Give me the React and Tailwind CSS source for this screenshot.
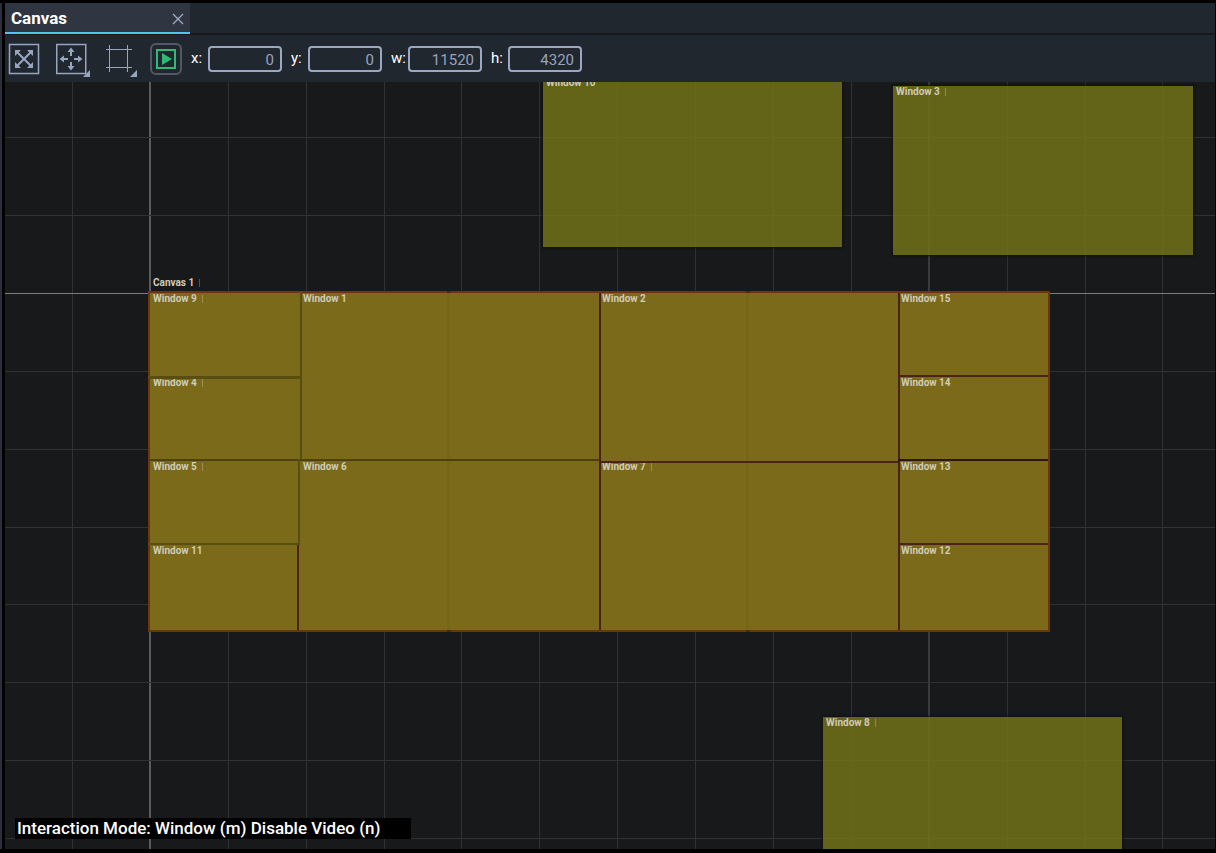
import { useState } from 'react'

const GRID_X = [
  { at: 67 },
  { at: 144, size: 2, color: '#5a5b5c' },
  { at: 223 },
  { at: 301 },
  { at: 379 },
  { at: 456 },
  { at: 534 },
  { at: 612 },
  { at: 690 },
  { at: 768 },
  { at: 846 },
  { at: 923, size: 2, color: '#3a3b3c' },
  { at: 1002 },
  { at: 1080 },
  { at: 1157 },
]

const GRID_Y = [
  { at: 55 },
  { at: 133 },
  { at: 211, color: '#7b7c7c' },
  { at: 289 },
  { at: 367 },
  { at: 445 },
  { at: 522 },
  { at: 600 },
  { at: 678 },
  { at: 756 },
]

// windows parked outside of the canvas, in stage coordinates
const FREE_WINDOWS = [
  { name: 'Window 10', x: 538, y: -5, w: 299, h: 170 },
  { name: 'Window 3', x: 888, y: 4, w: 300, h: 169, mark: true },
  { name: 'Window 8', x: 818, y: 635, w: 299, h: 169, mark: true },
]

// windows on the canvas, relative to its top left corner
const CANVAS_WINDOWS = [
  { name: 'Window 9', x: 2, y: 2, w: 150, h: 84, mark: true },
  { name: 'Window 4', x: 2, y: 86, w: 150, h: 84, mark: true },
  { name: 'Window 5', x: 2, y: 170, w: 150, h: 84, mark: true },
  { name: 'Window 11', x: 2, y: 254, w: 150, h: 84 },
  { name: 'Window 1', x: 152, y: 2, w: 299, h: 168 },
  { name: 'Window 6', x: 152, y: 170, w: 299, h: 168 },
  { name: 'Window 2', x: 451, y: 2, w: 299, h: 168 },
  { name: 'Window 7', x: 451, y: 170, w: 299, h: 168, mark: true },
  { name: 'Window 15', x: 750, y: 2, w: 150, h: 84 },
  { name: 'Window 14', x: 750, y: 86, w: 150, h: 84 },
  { name: 'Window 13', x: 750, y: 170, w: 150, h: 84 },
  { name: 'Window 12', x: 750, y: 254, w: 150, h: 84 },
]

const OLIVE = '#584e12'
const RED = '#4b2215'

const SEAMS = [
  { x: 299, y: 2, w: 3, h: 337, fill: '#766717' },
  { x: 299, y: 0, w: 4, h: 2, fill: '#4a2c0b' },
  { x: 299, y: 339, w: 4, h: 2, fill: '#4a2c0b' },
  { x: 598, y: 2, w: 3, h: 337, fill: '#766717' },
  { x: 598, y: 0, w: 4, h: 2, fill: '#4a2c0b' },
  { x: 598, y: 339, w: 4, h: 2, fill: '#4a2c0b' },
  { x: 0, y: 85, w: 154, h: 3, fill: OLIVE },
  { x: 152, y: 0, w: 2, h: 170, fill: OLIVE },
  { x: 0, y: 168, w: 452, h: 2, fill: '#4b4210' },
  { x: 150, y: 168, w: 2, h: 86, fill: OLIVE },
  { x: 0, y: 252, w: 151, h: 2, fill: OLIVE },
  { x: 149, y: 254, w: 2, h: 85, fill: RED },
  { x: 451, y: 2, w: 2, h: 337, fill: RED },
  { x: 453, y: 170, w: 297, h: 2, fill: RED },
  { x: 750, y: 2, w: 2, h: 337, fill: RED },
  { x: 752, y: 84, w: 148, h: 2, fill: RED },
  { x: 750, y: 168, w: 150, h: 2, fill: '#2d170e' },
  { x: 752, y: 252, w: 148, h: 2, fill: RED },
]

function Label({ children, mark }) {
  return (
    <span className="inline-flex items-center gap-[5px] whitespace-nowrap text-[10px] leading-3 font-bold text-[#d0ccb8]">
      {children}
      {mark && <span className="h-2 w-px bg-white/25" />}
    </span>
  )
}

function StageWindow({ win, className }) {
  return (
    <div
      className={`absolute flex items-start pl-[3px] ${className}`}
      style={{ left: win.x, top: win.y, width: win.w, height: win.h }}
    >
      <Label mark={win.mark}>{win.name}</Label>
    </div>
  )
}

function Grid() {
  return (
    <svg className="absolute inset-0 h-full w-full" shapeRendering="crispEdges" aria-hidden="true">
      {GRID_X.map(({ at, size = 1, color = '#303132' }) => (
        <rect key={at} x={at} y="0" width={size} height="100%" fill={color} />
      ))}
      {GRID_Y.map(({ at, size = 1, color = '#303132' }) => (
        <rect key={at} x="0" y={at} width="100%" height={size} fill={color} />
      ))}
    </svg>
  )
}

function Field({ name, value, onChange }) {
  return (
    <label className="flex items-center text-[15px] text-white">
      <span className="w-[17px]">{name}:</span>
      <input
        type="text"
        value={value}
        onChange={(e) => onChange(e.target.value)}
        className="h-[26px] w-[74px] rounded-[4px] border-2 border-[#9ca8c3] bg-[#20272f] pt-0.5 pr-1.5 text-right text-[15px] text-[#98a3bd] outline-none"
      />
    </label>
  )
}

function FitIcon() {
  return (
    <svg width="32" height="36" viewBox="0 0 32 36" fill="none" stroke="#98a5c0" strokeWidth="2">
      <rect x="1.500" y="3.500" width="29" height="29" strokeWidth="1.500" />
      <path d="M9 11l14 14M23 11 9 25" />
      <path d="M7 9h6l-6 6zM25 9v6l-6-6zM25 27h-6l6-6zM7 27v-6l6 6z" fill="#98a5c0" stroke="none" />
    </svg>
  )
}

function MoveIcon() {
  return (
    <svg width="34" height="36" viewBox="0 0 34 36" fill="none" stroke="#98a5c0" strokeWidth="2">
      <rect x="0.750" y="3.500" width="29" height="29" strokeWidth="1.500" />
      <path d="M15 15V9M15 21v6M12 18H6M18 18h6" />
      <path
        d="M15 6.500 18.500 11h-7zM15 29.500l3.500-4.500h-7zM3.500 18 8 14.500v7zM26.500 18 22 14.500v7z"
        fill="#98a5c0"
        stroke="none"
      />
      <path d="M34 29v7h-7z" fill="#98a5c0" stroke="none" />
    </svg>
  )
}

function FrameIcon() {
  return (
    <svg width="36" height="36" viewBox="0 0 36 36" fill="none" stroke="#98a5c0">
      <path d="M5.500 4v27M23.500 4v27M2 8.500h26M2 26.500h26" />
      <path d="M33 29v7h-7z" fill="#98a5c0" stroke="none" />
    </svg>
  )
}

function PlayIcon() {
  return (
    <svg width="22" height="22" viewBox="0 0 22 22" fill="none">
      <rect x="2" y="2" width="18" height="18" stroke="#2fba78" strokeWidth="2" />
      <path d="M7 5v12l10-6z" fill="#2fba78" />
    </svg>
  )
}

export default function App() {
  const [rect, setRect] = useState({ x: '0', y: '0', w: '11520', h: '4320' })

  return (
    <div className="flex h-screen gap-[3px] bg-black pt-[3px] pr-px pb-1 font-[Roboto,sans-serif]">
      {/* edge of the neighbouring panel */}
      <div className="w-0.5 shrink-0 bg-[#2a303b]" />

      <main className="flex min-w-0 flex-1 flex-col bg-[#18191a]">
        {/* Tabs */}
        <div className="flex h-8 shrink-0 border-b-2 border-[#18191a] bg-[#20272f]">
          <div className="-mb-px flex w-[185px] items-center justify-between border-b-2 border-[#4ec5ee] bg-[#2f3541] pt-0.5 pr-1.5 pl-1.5">
            <h1 className="text-[17px] font-bold text-white">Canvas</h1>
            <button type="button" aria-label="Close" className="flex">
              <svg width="12" height="12" viewBox="0 0 12 12" stroke="#a3afc8" strokeWidth="1.200">
                <path d="M1 1l10 10M11 1 1 11" />
              </svg>
            </button>
          </div>
        </div>

        {/* Toolbar */}
        <div className="flex h-[47px] shrink-0 items-center bg-[#20272f] pl-[3px]">
          <div className="flex items-center gap-4">
            <button type="button" aria-label="Fit to view">
              <FitIcon />
            </button>
            <button type="button" aria-label="Move">
              <MoveIcon />
            </button>
          </div>
          <button type="button" aria-label="Frame" className="ml-3.5">
            <FrameIcon />
          </button>
          <button
            type="button"
            aria-label="Play"
            className="ml-2.5 flex size-8 items-center justify-center rounded-md border-2 border-[#525866]"
          >
            <PlayIcon />
          </button>
          <div className="ml-[9px] flex items-center gap-[9px]">
            {Object.keys(rect).map((key) => (
              <Field
                key={key}
                name={key}
                value={rect[key]}
                onChange={(value) => setRect({ ...rect, [key]: value })}
              />
            ))}
          </div>
        </div>

        {/* Stage */}
        <div className="relative min-h-0 flex-1 overflow-hidden">
          <Grid />

          {FREE_WINDOWS.map((win) => (
            <StageWindow
              key={win.name}
              win={win}
              className="bg-[#717219]/85 shadow-[0_0_2px_1px_#101112]"
            />
          ))}

          <div className="absolute top-[195px] left-[148px] flex">
            <Label mark>Canvas 1</Label>
          </div>
          <div className="absolute top-[209px] left-[143px] h-[341px] w-[902px] bg-[#7a6a19]">
            {CANVAS_WINDOWS.map((win) => (
              <StageWindow key={win.name} win={win} className="" />
            ))}
            <svg className="absolute inset-0 h-full w-full" shapeRendering="crispEdges" aria-hidden="true">
              <rect x="1" y="1" width="900" height="339" fill="none" stroke="#6c350b" strokeWidth="2" />
              {SEAMS.map((s) => (
                <rect key={`${s.x}-${s.y}-${s.w}`} x={s.x} y={s.y} width={s.w} height={s.h} fill={s.fill} />
              ))}
            </svg>
          </div>

          <p className="absolute bottom-2.5 left-2.5 w-[396px] bg-black pl-0.5 text-[17px] leading-[21px] font-medium text-white">
            Interaction Mode: Window (m) Disable Video (n)
          </p>
        </div>
      </main>
    </div>
  )
}
